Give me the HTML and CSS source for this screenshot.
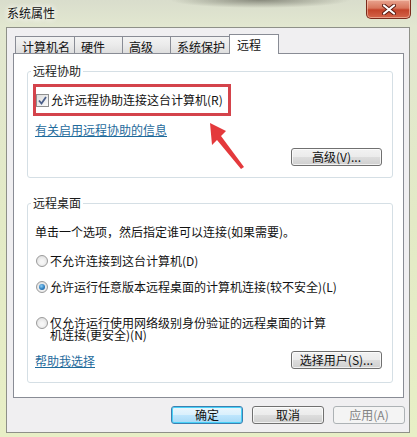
FILE: index.html
```html
<!DOCTYPE html>
<html lang="zh-CN">
<head>
    <meta charset="UTF-8">
    <title>系统属性</title>
    <link rel="stylesheet" href="styles.css">
</head>
<body>
    <div class="window">
        <div class="titlebar">
            <span class="title">系统属性</span>
            <button class="close-btn" aria-label="关闭">
                <svg width="14" height="11" viewBox="0 0 14 11">
                    <path d="M2 1.5 L12 9.5 M12 1.5 L2 9.5" stroke="#5a1a10" stroke-width="4" stroke-linecap="round"/>
                    <path d="M2 1.5 L12 9.5 M12 1.5 L2 9.5" stroke="#ffffff" stroke-width="2.2" stroke-linecap="round"/>
                </svg>
            </button>
        </div>

        <div class="client">
            <div class="tabs">
                <div class="tab">计算机名</div>
                <div class="tab">硬件</div>
                <div class="tab">高级</div>
                <div class="tab">系统保护</div>
                <div class="tab active">远程</div>
            </div>

            <div class="panel">
                <fieldset class="group group-assist">
                    <legend>远程协助</legend>
                    <label class="check-row highlight">
                        <span class="checkbox checked">
                            <svg width="9" height="9" viewBox="0 0 9 9">
                                <path d="M1 4.5 L3.5 7.5 L8 1" fill="none" stroke="#4b5f8a" stroke-width="1.8"/>
                            </svg>
                        </span>
                        <span>允许远程协助连接这台计算机(R)</span>
                    </label>
                    <div class="link-row"><a class="link">有关启用远程协助的信息</a></div>
                    <div class="group-actions">
                        <button class="btn btn-wide">高级(V)...</button>
                    </div>
                </fieldset>

                <fieldset class="group group-desktop">
                    <legend>远程桌面</legend>
                    <p class="hint">单击一个选项，然后指定谁可以连接(如果需要)。</p>
                    <label class="radio-row first">
                        <span class="radio"></span>
                        <span>不允许连接到这台计算机(D)</span>
                    </label>
                    <label class="radio-row second">
                        <span class="radio checked"></span>
                        <span>允许运行任意版本远程桌面的计算机连接(较不安全)(L)</span>
                    </label>
                    <label class="radio-row third">
                        <span class="radio"></span>
                        <span class="wrap-text">仅允许运行使用网络级别身份验证的远程桌面的计算机连接(更安全)(N)</span>
                    </label>
                    <div class="group-actions between">
                        <a class="link">帮助我选择</a>
                        <button class="btn btn-wide">选择用户(S)...</button>
                    </div>
                </fieldset>
            </div>

            <div class="footer">
                <button class="btn default">确定</button>
                <button class="btn">取消</button>
                <button class="btn" disabled>应用(A)</button>
            </div>
        </div>
    </div>

    <!-- annotation arrow pointing at the checkbox -->
    <svg class="annotation-arrow" width="50" height="60" viewBox="0 0 50 60">
        <polygon points="10,8 26,16 21,21 44,52 41,54 17,25 12,30" fill="#e4393c"/>
    </svg>
</body>
</html>
```

FILE: styles.css
```css
body {
    margin: 0;
    width: 417px;
    height: 437px;
    overflow: hidden;
    font-family: "Noto Sans CJK SC", "Liberation Sans", sans-serif;
    font-size: 12px;
    color: #111;
    background:
        radial-gradient(ellipse 90px 8px at 260px 0, rgba(70, 70, 60, 0.55), transparent),
        linear-gradient(180deg, #d9ddcc 0%, #e2e7d0 6%, #e3eac6 50%, #e8efc6 100%);
    position: relative;
}

.window {
    width: 417px;
}

.titlebar {
    height: 27px;
    display: flex;
    justify-content: space-between;
    align-items: flex-start;
}

.title {
    padding-left: 7px;
    line-height: 26px;
    font-size: 12px;
    color: #111;
    text-shadow: 0 0 6px #fff, 0 0 6px #fff;
}

.close-btn {
    width: 45px;
    height: 19px;
    margin-right: 6px;
    padding: 0;
    border: 1px solid #7a2a1c;
    border-top: none;
    border-radius: 0 0 5px 5px;
    background: linear-gradient(180deg, #e9a48f 0%, #d8765c 45%, #c3432a 55%, #d4654a 100%);
    box-shadow: inset 0 0 0 1px rgba(255, 220, 200, 0.5);
    display: flex;
    align-items: center;
    justify-content: center;
}

.client {
    box-sizing: border-box;
    width: 404px;
    height: 406px;
    margin-left: 6px;
    background: #f0eff1;
    border: 1px solid #8e9088;
}

.tabs {
    display: flex;
    align-items: flex-end;
    padding: 6px 0 0 8px;
}

.tab {
    box-sizing: border-box;
    height: 17px;
    min-width: 49px;
    padding: 2px 4px 0 6px;
    line-height: 15px;
    margin-right: -1px;
    border: 1px solid #898c95;
    border-bottom: none;
    background: linear-gradient(180deg, #f3f3f3 0%, #ebebeb 50%, #dedede 100%);
    white-space: nowrap;
}

.tab.active {
    height: 20px;
    min-width: 50px;
    padding: 2px 7px 0 7px;
    line-height: 16px;
    margin-bottom: -1px;
    background: #fff;
    position: relative;
    z-index: 1;
}

.panel {
    box-sizing: border-box;
    margin: 0 5px 0 6px;
    height: 345px;
    background: #fff;
    border: 1px solid #898c95;
    padding-top: 9px;
}

.group {
    margin: 0 10px 0 13px;
    padding: 0 10px 0 7px;
    min-width: 0;
    border: 1px solid #d5dfe5;
    border-radius: 3px;
}

.group legend {
    margin-left: -4px;
    padding: 0 2px;
    line-height: 16px;
    color: #1b1b1b;
}

.group-assist {
    padding-bottom: 11px;
}

.group-desktop {
    margin-top: 17px;
    padding-bottom: 13px;
}

.check-row {
    box-sizing: border-box;
    display: flex;
    align-items: center;
    width: 198px;
    height: 32px;
    margin: 5px 0 0 -2px;
    line-height: 16px;
}

.highlight {
    border: 3px solid #d4434b;
}

.checkbox {
    box-sizing: border-box;
    width: 13px;
    height: 13px;
    margin-right: 2px;
    border: 1px solid #8e8f8f;
    background: linear-gradient(135deg, #dcdcdc, #fbfbfb);
    display: flex;
    align-items: center;
    justify-content: center;
}

.link-row {
    margin-top: 6px;
    line-height: 16px;
}

.link {
    color: #1f6b9c;
    text-decoration: underline;
    cursor: pointer;
}

.group-actions {
    display: flex;
    justify-content: flex-end;
    align-items: center;
    margin-top: 10px;
    height: 18px;
}

.group-actions.between {
    justify-content: space-between;
}

.hint {
    margin: 13px 0 0;
    line-height: 16px;
}

.radio-row {
    display: flex;
    align-items: center;
    line-height: 16px;
}

.radio-row.first {
    margin-top: 13px;
}

.radio-row.second {
    margin-top: 10px;
}

.radio-row.third {
    margin-top: 22px;
    align-items: flex-start;
    line-height: 12px;
}

.wrap-text {
    width: 280px;
}

.radio {
    box-sizing: border-box;
    width: 12px;
    height: 12px;
    margin: 0 2px 0 1px;
    flex-shrink: 0;
    border-radius: 50%;
    border: 1px solid #9a9a9a;
    background: radial-gradient(circle at 50% 60%, #f6f6f6 20%, #d9d9d9 100%);
    display: flex;
    align-items: center;
    justify-content: center;
}

.radio.checked::after {
    content: "";
    width: 6px;
    height: 6px;
    border-radius: 50%;
    background: radial-gradient(circle at 40% 35%, #8fd0f5 0%, #2f7fc0 55%, #1a4e86 100%);
}

.btn {
    box-sizing: border-box;
    width: 72px;
    height: 18px;
    padding: 0;
    font-family: inherit;
    font-size: 12px;
    line-height: 16px;
    color: #111;
    border: 1px solid #707070;
    border-radius: 3px;
    background: linear-gradient(180deg, #f2f2f2 0%, #ebebeb 50%, #dddddd 51%, #cfcfcf 100%);
    box-shadow: inset 0 0 0 1px rgba(255, 255, 255, 0.7);
}

.btn-wide {
    width: 91px;
}

.btn.default {
    border-color: #3c7fb1;
    box-shadow: inset 0 0 0 1px #48d1f8;
    background: linear-gradient(180deg, #eaf6fd 0%, #d9f0fc 50%, #bee6fd 51%, #a7d9f5 100%);
}

.btn:disabled {
    color: #838383;
    border-color: #adb2b5;
    background: #f4f4f4;
    box-shadow: none;
}

.footer {
    display: flex;
    justify-content: flex-end;
    gap: 9px;
    margin-top: 8px;
    padding-right: 4px;
}

.annotation-arrow {
    position: absolute;
    left: 200px;
    top: 115px;
    pointer-events: none;
}
```
